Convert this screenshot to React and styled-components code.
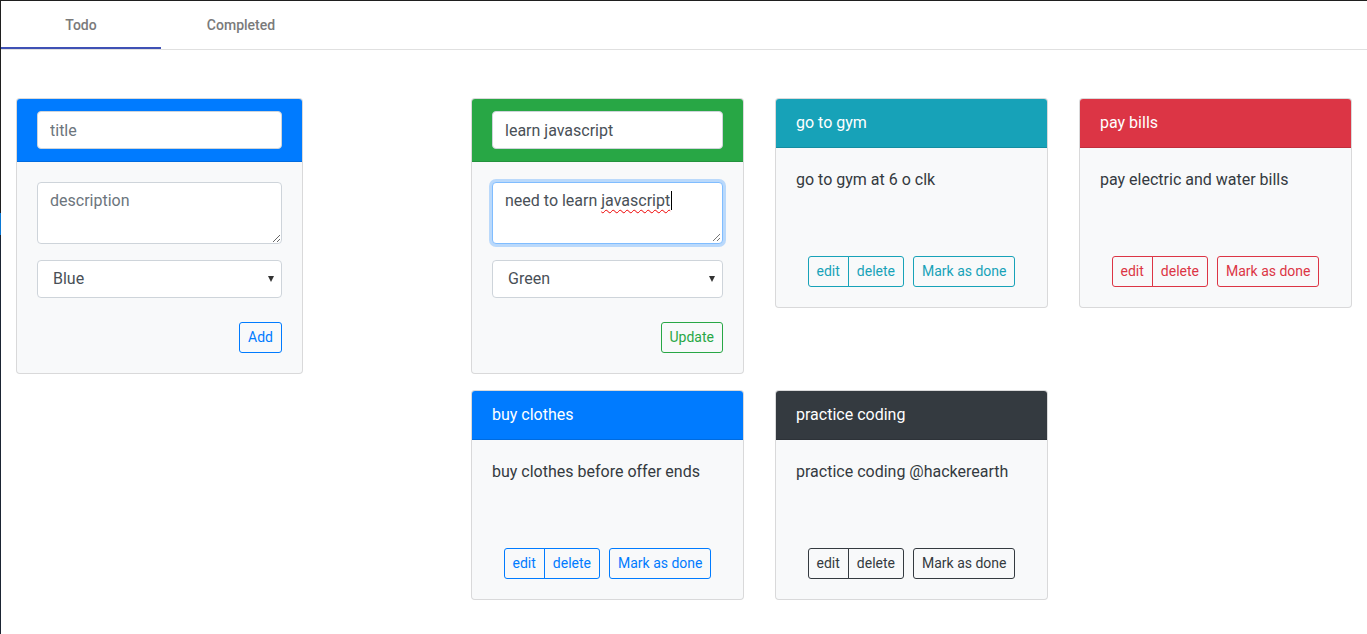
import React from "react";
import styled, { createGlobalStyle, css } from "styled-components";

const colors = {
  primary: "#007bff",
  success: "#28a745",
  info: "#17a2b8",
  danger: "#dc3545",
  dark: "#343a40",
};

const todos = [
  { title: "go to gym", text: "go to gym at 6 o clk", color: colors.info },
  { title: "pay bills", text: "pay electric and water bills", color: colors.danger },
  { title: "buy clothes", text: "buy clothes before offer ends", color: colors.primary },
  { title: "practice coding", text: "practice coding @hackerearth", color: colors.dark },
];

const GlobalStyle = createGlobalStyle`
  html, body {
    margin: 0;
    background: #fff;
    font-family: Roboto, "Liberation Sans", sans-serif;
    color: #212529;
  }
  * { box-sizing: border-box; }
`;

export default function App() {
  return (
    <Window>
      <GlobalStyle />
      <TabBar>
        <Tab $active>Todo</Tab>
        <Tab>Completed</Tab>
      </TabBar>
      <Content>
        <FormColumn>
          <Card>
            <CardHeader $bg={colors.primary}>
              <Input placeholder="title" />
            </CardHeader>
            <CardBody>
              <TextArea rows={2} placeholder="description" />
              <SelectWrap>
                <Select defaultValue="Blue">
                  <option>Blue</option>
                  <option>Green</option>
                  <option>Red</option>
                </Select>
              </SelectWrap>
              <Actions>
                <OutlineButton $c={colors.primary}>Add</OutlineButton>
              </Actions>
            </CardBody>
          </Card>
        </FormColumn>

        <Grid>
          <Card>
            <CardHeader $bg={colors.success}>
              <Input defaultValue="learn javascript" />
            </CardHeader>
            <CardBody>
              <FocusedArea>
                need to learn <Misspelled>javascript</Misspelled>
                <Caret />
                <Grip viewBox="0 0 10 10">
                  <line x1="9" y1="2" x2="2" y2="9" />
                  <line x1="9" y1="6" x2="6" y2="9" />
                </Grip>
              </FocusedArea>
              <SelectWrap>
                <Select defaultValue="Green">
                  <option>Blue</option>
                  <option>Green</option>
                  <option>Red</option>
                </Select>
              </SelectWrap>
              <Actions>
                <OutlineButton $c={colors.success}>Update</OutlineButton>
              </Actions>
            </CardBody>
          </Card>

          {todos.map((t) => (
            <Card key={t.title}>
              <CardHeader $bg={t.color}>{t.title}</CardHeader>
              <CardBody>
                <Description>{t.text}</Description>
                <ButtonRow>
                  <ButtonGroup>
                    <OutlineButton $c={t.color}>edit</OutlineButton>
                    <OutlineButton $c={t.color}>delete</OutlineButton>
                  </ButtonGroup>
                  <OutlineButton $c={t.color}>Mark as done</OutlineButton>
                </ButtonRow>
              </CardBody>
            </Card>
          ))}
        </Grid>
      </Content>
    </Window>
  );
}

const Window = styled.div`
  min-height: 634px;
  border-top: 1px solid #1f1f1f;
  padding-left: 1px;
  background:
    linear-gradient(#1f1f1f 0 212px, #0a78d4 212px 234px, #1b2433 234px) left top / 1px 100% no-repeat,
    #fff;
`;

const TabBar = styled.div`
  display: flex;
  height: 49px;
  border-bottom: 1px solid #e0e0e0;
`;

const Tab = styled.div`
  position: relative;
  width: 160px;
  height: 48px;
  display: flex;
  align-items: center;
  justify-content: center;
  font-size: 14px;
  font-weight: 500;
  color: #7a7a7a;
  ${(p) =>
    p.$active &&
    css`
      &::after {
        content: "";
        position: absolute;
        left: 0;
        right: 0;
        bottom: 0;
        height: 2px;
        background: #3f51b5;
      }
    `}
`;

const Content = styled.div`
  display: flex;
  align-items: flex-start;
  padding: 48px 15px 30px;
`;

const FormColumn = styled.div`
  flex: 0 0 287px;
`;

const Grid = styled.div`
  margin-left: auto;
  display: grid;
  grid-template-columns: repeat(3, 273px);
  column-gap: 31px;
  row-gap: 16px;
  align-items: start;
`;

const Card = styled.div`
  border: 1px solid rgba(0, 0, 0, 0.125);
  border-radius: 4px;
  background: #f8f9fa;
  overflow: hidden;
`;

const CardHeader = styled.div`
  background: ${(p) => p.$bg};
  color: #fff;
  padding: 12px 20px;
  font-size: 16px;
  line-height: 24px;
  border-bottom: 1px solid rgba(0, 0, 0, 0.125);
`;

const CardBody = styled.div`
  padding: 20px;
`;

const fieldBase = css`
  display: block;
  width: 100%;
  font-family: Roboto, "Liberation Sans", sans-serif;
  font-size: 16px;
  line-height: 24px;
  color: #495057;
  background: #fff;
  border: 1px solid #ced4da;
  border-radius: 4px;
  padding: 6px 12px;
  outline: none;
  &::placeholder {
    color: #6c757d;
  }
`;

const Input = styled.input`
  ${fieldBase};
  height: 38px;
`;

const TextArea = styled.textarea`
  ${fieldBase};
  height: 62px;
  margin: 0 0 16px;
  resize: vertical;
`;

const FocusedArea = styled.div`
  ${fieldBase};
  position: relative;
  height: 62px;
  margin: 0 0 16px;
  border-color: #80bdff;
  box-shadow: 0 0 0 3px rgba(0, 123, 255, 0.25);
`;

const Misspelled = styled.span`
  text-decoration: underline wavy #e00;
  text-decoration-thickness: 1px;
  text-underline-offset: 3px;
`;

const Caret = styled.span`
  display: inline-block;
  width: 1px;
  height: 19px;
  margin-left: 1px;
  vertical-align: -4px;
  background: #000;
`;

const Grip = styled.svg`
  position: absolute;
  right: 1px;
  bottom: 1px;
  width: 10px;
  height: 10px;
  stroke: #777;
  stroke-width: 1;
`;

const SelectWrap = styled.div`
  position: relative;
  &::after {
    content: "";
    position: absolute;
    right: 8px;
    top: 16px;
    border-left: 3.5px solid transparent;
    border-right: 3.5px solid transparent;
    border-top: 6px solid #333;
    pointer-events: none;
  }
`;

const Select = styled.select`
  ${fieldBase};
  height: 38px;
  padding-left: 15px;
  appearance: none;
`;

const Actions = styled.div`
  display: flex;
  justify-content: flex-end;
  margin-top: 24px;
`;

const Description = styled.p`
  margin: 0 0 64px;
  font-size: 16px;
  line-height: 24px;
  color: #343a40;
`;

const ButtonRow = styled.div`
  display: flex;
  justify-content: center;
  gap: 9px;
`;

const ButtonGroup = styled.div`
  display: inline-flex;
  & > button:first-child {
    border-top-right-radius: 0;
    border-bottom-right-radius: 0;
  }
  & > button + button {
    margin-left: -1px;
    border-top-left-radius: 0;
    border-bottom-left-radius: 0;
  }
`;

const OutlineButton = styled.button`
  font-family: Roboto, "Liberation Sans", sans-serif;
  font-size: 14px;
  line-height: 21px;
  padding: 4px 8px;
  color: ${(p) => p.$c};
  background: transparent;
  border: 1px solid ${(p) => p.$c};
  border-radius: 3px;
  cursor: pointer;
`;
